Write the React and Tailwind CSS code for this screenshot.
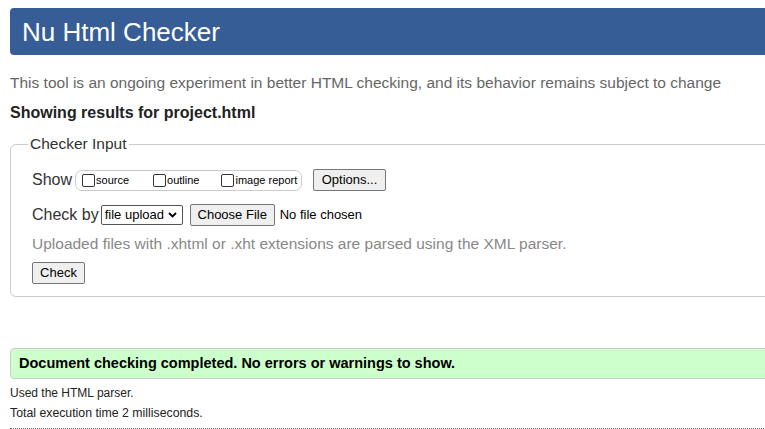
import React from "react";

function Box() {
  return <span className="inline-block w-[13px] h-[13px] border border-[#333] rounded-[2px] bg-white mr-[1px]" />;
}

function Btn({ children, className = "" }) {
  return (
    <span className={"inline-flex items-center justify-center whitespace-nowrap h-[22px] border border-[#767676] rounded-[2px] bg-[#efefef] text-[13px] text-black " + className}>
      {children}
    </span>
  );
}

export default function App() {
  return (
    <div className="w-[765px] h-[429px] overflow-hidden bg-white" style={{ fontFamily: '"Liberation Sans", Arial, sans-serif' }}>
      <div className="w-[820px] pl-[10px]">
        <div className="mt-[8px] h-[47px] bg-[#365d95] rounded-l-[4px] flex items-center pl-[12px]">
          <h1 className="text-[26px] text-white leading-none font-normal">Nu Html Checker</h1>
        </div>
        <p className="mt-[18px] text-[15.5px] leading-[20px] text-[#666] whitespace-nowrap">
          This tool is an ongoing experiment in better HTML checking, and its behavior remains subject to change
        </p>
        <p className="mt-[10px] text-[16px] leading-[20px] font-bold text-[#222]">Showing results for project.html</p>
        <fieldset className="mt-[11px] border border-[#ccc] rounded-[6px] pl-[21px] pt-[15px] pb-[12px] text-[#333]">
          <legend className="-ml-[4px] px-[2px] text-[15.5px] leading-[20px] text-[#333]">Checker Input</legend>
          <div className="flex items-center h-[22px]">
            <span className="text-[16px] leading-[20px]">Show</span>
            <span className="ml-[3px] h-[21px] w-[227px] border border-[#ccc] rounded-[7px] flex items-center pl-[6px] text-[11px] text-black">
              <span className="flex items-center"><Box />source</span>
              <span className="flex items-center ml-[24px]"><Box />outline</span>
              <span className="flex items-center ml-[22px]"><Box />image report</span>
            </span>
            <Btn className="ml-[11px] w-[73px]">Options...</Btn>
          </div>
          <div className="flex items-center h-[22px] mt-[13px]">
            <span className="text-[16px] leading-[20px]">Check by</span>
            <span className="ml-[2px] h-[20px] w-[82px] border border-[#555] rounded-[2px] flex items-center pl-[3px] text-[13px] text-black">
              file upload
              <svg className="ml-[4px]" width="9" height="6" viewBox="0 0 9 6"><path d="M1 1 L4.5 4.5 L8 1" stroke="#000" strokeWidth="1.8" fill="none" /></svg>
            </span>
            <Btn className="ml-[7px] w-[85px]">Choose File</Btn>
            <span className="ml-[5px] text-[13px] text-black">No file chosen</span>
          </div>
          <p className="mt-[8px] text-[15.5px] leading-[20px] text-[#888] whitespace-nowrap">
            Uploaded files with .xhtml or .xht extensions are parsed using the XML parser.
          </p>
          <div className="mt-[8px] flex">
            <Btn className="w-[53px]">Check</Btn>
          </div>
        </fieldset>
        <div className="mt-[51px] h-[31px] bg-[#ccffcc] border border-[#ccc] rounded-l-[4px] flex items-center pl-[8px]">
          <span className="text-[14.5px] font-bold text-black whitespace-nowrap">Document checking completed. No errors or warnings to show.</span>
        </div>
        <p className="mt-[4px] text-[12px] leading-[20px] text-[#222]">Used the HTML parser.</p>
        <p className="text-[12.3px] leading-[20px] text-[#222]">Total execution time 2 milliseconds.</p>
        <div className="mt-[5px] border-t border-dotted border-[#666]" />
      </div>
    </div>
  );
}
